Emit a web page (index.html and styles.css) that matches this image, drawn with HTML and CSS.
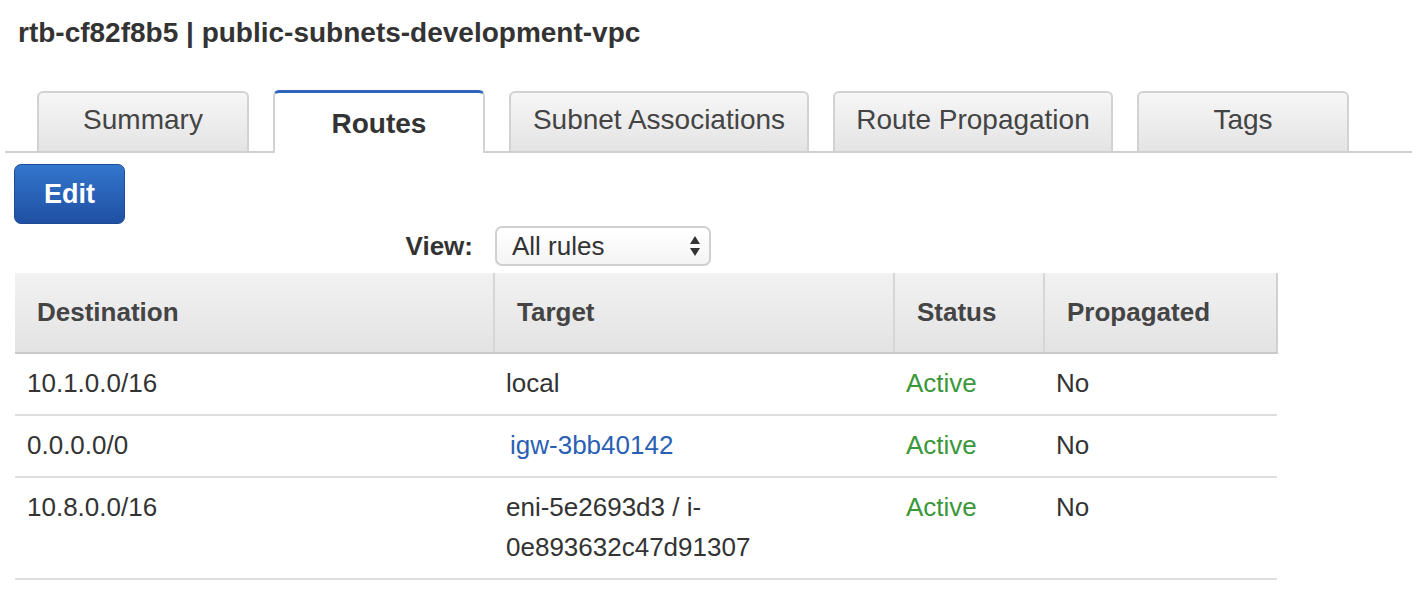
FILE: index.html
```html
<!DOCTYPE html>
<html>
<head>
<meta charset="utf-8">
<link rel="stylesheet" href="styles.css">
</head>
<body>
<h1 class="title">rtb-cf82f8b5 | public-subnets-development-vpc</h1>
<div class="tabs">
  <div class="tab tab-summary">Summary</div>
  <div class="tab tab-active">Routes</div>
  <div class="tab tab-subnet">Subnet Associations</div>
  <div class="tab tab-prop">Route Propagation</div>
  <div class="tab tab-tags">Tags</div>
</div>
<button class="edit-btn">Edit</button>
<div class="view-row">
  <label class="view-label">View:</label>
  <div class="select">
    <span>All rules</span>
    <svg class="arrows" width="12" height="24" viewBox="0 0 12 24"><path d="M6 2 L11 10 L1 10 Z" fill="#333"/><path d="M1 14 L11 14 L6 22 Z" fill="#333"/></svg>
  </div>
</div>
<table class="routes">
  <thead>
    <tr>
      <th class="c-dest">Destination</th>
      <th class="c-target">Target</th>
      <th class="c-status">Status</th>
      <th class="c-prop">Propagated</th>
    </tr>
  </thead>
  <tbody>
    <tr>
      <td>10.1.0.0/16</td>
      <td>local</td>
      <td class="active">Active</td>
      <td>No</td>
    </tr>
    <tr>
      <td>0.0.0.0/0</td>
      <td><a class="link" href="#">igw-3bb40142</a></td>
      <td class="active">Active</td>
      <td>No</td>
    </tr>
    <tr>
      <td>10.8.0.0/16</td>
      <td>eni-5e2693d3 / i-<wbr>0e893632c47d91307</td>
      <td class="active">Active</td>
      <td>No</td>
    </tr>
  </tbody>
</table>
</body>
</html>
```
FILE: styles.css
```css
html, body {
  margin: 0;
  padding: 0;
  background: #fff;
}
body {
  font-family: "Liberation Sans", Arial, Helvetica, sans-serif;
  color: #444;
}
.title {
  margin: 18px 0 0 18px;
  font-size: 28px;
  line-height: 30px;
  font-weight: bold;
  color: #333;
}
.tabs {
  display: flex;
  align-items: flex-end;
  gap: 24px;
  margin: 42px 0 0 5px;
  padding-left: 32px;
  border-bottom: 2px solid #cfcfcf;
  height: 61px;
}
.tab {
  box-sizing: border-box;
  height: 60px;
  border: 2px solid #d2d2d2;
  border-bottom: none;
  border-radius: 6px 6px 0 0;
  background: linear-gradient(#f6f6f6, #e4e4e4);
  font-size: 28px;
  line-height: 54px;
  text-align: center;
  color: #444;
}
.tab-summary, .tab-tags { width: 212px; }
.tab-subnet { width: 300px; }
.tab-prop { width: 280px; }
.tab-active {
  width: 212px;
  height: 63px;
  margin-bottom: -2px;
  background: #fff;
  border-top: 3px solid #2e67bd;
  font-weight: bold;
  line-height: 62px;
  color: #333;
}
.edit-btn {
  display: block;
  margin: 11px 0 0 14px;
  width: 111px;
  height: 60px;
  border: 1px solid #1d4b95;
  border-radius: 7px;
  background: linear-gradient(#3376cd, #1f50a3);
  color: #fff;
  font-family: "Liberation Sans", Arial, sans-serif;
  font-size: 27px;
  font-weight: bold;
  padding: 0;
}
.view-row {
  display: flex;
  align-items: center;
  margin-top: 2px;
  height: 40px;
}
.view-label {
  box-sizing: border-box;
  width: 495px;
  padding-right: 22px;
  text-align: right;
  font-size: 26px;
  font-weight: bold;
  color: #333;
}
.select {
  box-sizing: border-box;
  width: 216px;
  height: 40px;
  border: 2px solid #d0d0d0;
  border-radius: 7px;
  background: linear-gradient(#ffffff, #f4f4f4);
  display: flex;
  align-items: center;
  justify-content: space-between;
  padding: 0 8px 0 15px;
  font-size: 26px;
  color: #333;
}
.routes {
  margin: 7px 0 0 15px;
  width: 1263px;
  border-collapse: collapse;
  table-layout: fixed;
  font-size: 26px;
}
.routes th {
  box-sizing: border-box;
  height: 80px;
  padding: 0 0 0 22px;
  text-align: left;
  font-weight: bold;
  color: #444;
  background: linear-gradient(#f2f2f2, #e3e3e3);
  border-bottom: 2px solid #cacaca;
  border-right: 2px solid #d6d6d6;
}
.routes th.c-dest { width: 479px; }
.routes th.c-target { width: 400px; }
.routes th.c-status { width: 150px; }
.routes th.c-prop { border-right: 2px solid #d0d0d0; }
.routes td {
  padding: 9px 0 11px 12px;
  line-height: 40px;
  vertical-align: top;
  color: #333;
  border-bottom: 2px solid #dedede;
}
.routes td.active { color: #3a973a; }
.link {
  margin-left: 4px;
  color: #2b5fb4;
  text-decoration: none;
}
```
